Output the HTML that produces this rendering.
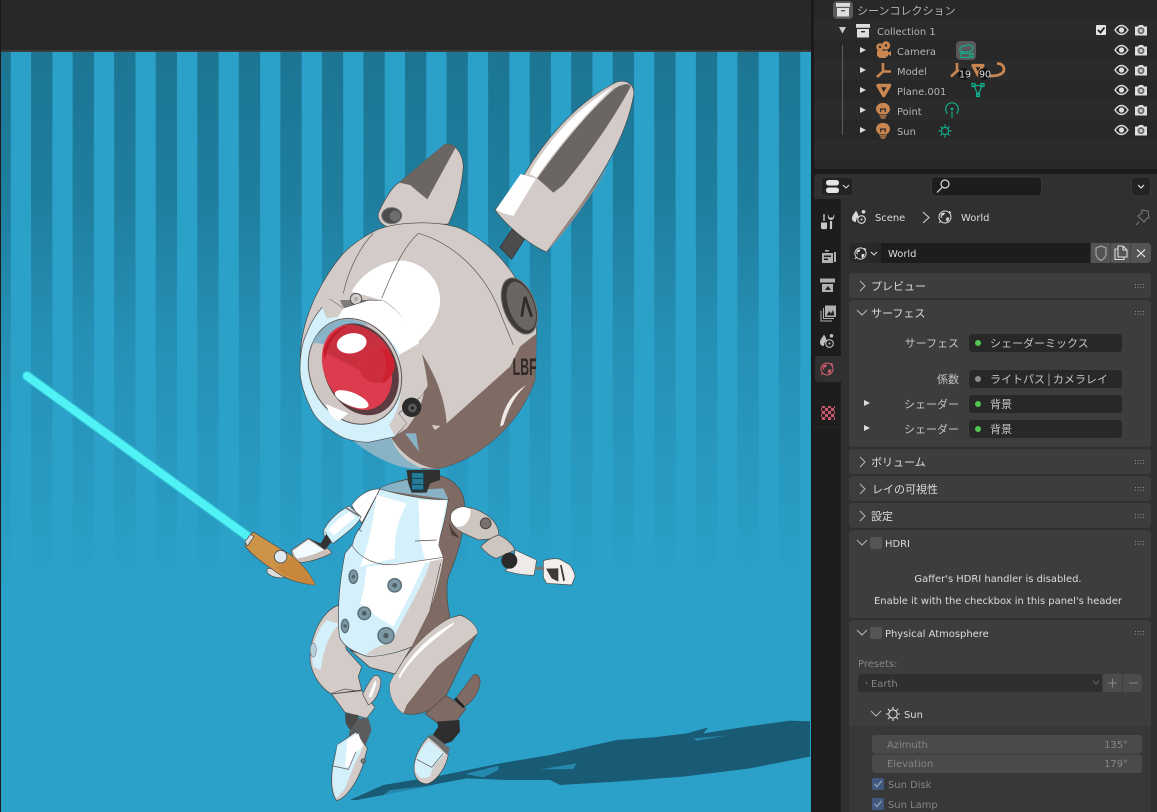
<!DOCTYPE html>
<html><head><meta charset="utf-8"><title>Blender</title>
<style>
html,body{margin:0;padding:0;background:#1a1a1a;width:1157px;height:812px;overflow:hidden}
svg{display:block}
text{font-family:"DejaVu Sans","Noto Sans CJK JP",sans-serif;font-size:9.95px;fill:#c4c4c4}
.j{font-family:"Noto Sans CJK JP","DejaVu Sans",sans-serif;font-size:11px}
.o{fill:#b4b4b4}
.d{fill:#858585}
.w{fill:#dcdcdc}
.e{text-anchor:end}
.m{text-anchor:middle}
.ln{stroke:#4a4644;stroke-width:2;stroke-linejoin:round}
.thin{fill:none;stroke:#5a5350;stroke-width:2}
</style></head><body>
<svg width="1157" height="812" viewBox="0 0 1157 812" xmlns="http://www.w3.org/2000/svg">
<defs>
<linearGradient id="fade" x1="0" y1="0" x2="0" y2="1"><stop offset="0" stop-color="#1c7593"/><stop offset=".27" stop-color="#1f7e9e"/><stop offset=".525" stop-color="#2590b6"/><stop offset=".76" stop-color="#2899c0"/><stop offset="1" stop-color="#2ba1ca"/></linearGradient>
<pattern id="stripes" x="-10.5" y="0" width="41.55" height="10" patternUnits="userSpaceOnUse"><rect x="0" width="21.3" height="10" fill="#fff"/></pattern>
<mask id="sm"><rect x="0" y="52" width="811" height="548" fill="url(#stripes)"/></mask>
<pattern id="chk" width="6" height="6" patternUnits="userSpaceOnUse"><rect width="6" height="6" fill="#c65a6c"/><rect width="3" height="3" fill="#2a2022"/><rect x="3" y="3" width="3" height="3" fill="#2a2022"/></pattern>
<pattern id="hatch" width="6" height="8" patternUnits="userSpaceOnUse" patternTransform="rotate(8)"><rect width="6" height="3" fill="#c22a38"/></pattern>
<symbol id="eye" viewBox="0 0 14 14" overflow="visible"><path d="M.5 7C3 3.2 5 2.5 7 2.5S11 3.2 13.5 7C11 10.8 9 11.5 7 11.5S3 10.8.5 7Z" fill="none" stroke="#dedede" stroke-width="1.400"/><circle cx="7" cy="7" r="2.600" fill="#dedede"/></symbol>
<symbol id="cam" viewBox="0 0 14 14" overflow="visible"><path d="M1 3.500h3l1-1.500h4l1 1.500h3v9H1Z" fill="#dedede"/><circle cx="7" cy="7.700" r="3.400" fill="#666"/><circle cx="7" cy="7.700" r="1.700" fill="#ccc"/></symbol>
<symbol id="tri" viewBox="0 0 8 8" overflow="visible"><path d="M1 1L7 4L1 7Z" fill="#dcdcdc"/></symbol>
<symbol id="bulb" viewBox="0 0 14 16" overflow="visible"><path d="M7 .8C3.200 .8 .8 3.400 .8 6.300C.8 8.800 2.800 9.600 3.600 11H10.400C11.200 9.600 13.200 8.800 13.200 6.300C13.200 3.400 10.800 .8 7 .8Z" fill="#c98650"/><path d="M4.300 6.300H9.700M5 6.300V9M9 6.300V9" stroke="#2a2a2a" stroke-width="1.100" fill="none"/><path d="M4 12.400H10M5 14.200H9" stroke="#c98650" stroke-width="1.200"/></symbol>
<symbol id="grip" viewBox="0 0 12 6" overflow="visible"><path d="M1 1.500h.9M3.700 1.500h.9M6.400 1.500h.9M9.100 1.500h.9M1 4.200h.9M3.700 4.200h.9M6.400 4.200h.9M9.100 4.200h.9" stroke="#999" stroke-width="1"/></symbol>
<symbol id="world" viewBox="0 0 16 16" overflow="visible"><circle cx="8" cy="8" r="6" fill="none" stroke="currentColor" stroke-width="1"/><path d="M4 5C5.500 3.600 7 3.400 8 4L7 6L4.500 6.800L5.500 9.500L3.500 8ZM9.500 8.500L12.500 8.500L11.500 11.500L9.800 13L9 10.500Z" fill="currentColor"/><path d="M2 13.800L4 11.800M12 2.200L14 4" stroke="currentColor" stroke-width="1"/></symbol>
<symbol id="scene" viewBox="0 0 16 16" overflow="visible"><path d="M5 1.500C6.500 4 7.500 5.500 7.500 8C6 8.500 5 10 5 13C2.500 13 1 11.500 1 9.500C1 6.500 3.500 4.500 5 1.500Z" fill="currentColor"/><circle cx="12.500" cy="2.800" r="1.800" fill="currentColor"/><circle cx="10.500" cy="10.500" r="3.800" fill="none" stroke="currentColor" stroke-width="1.100"/><circle cx="10.500" cy="10.500" r="1" fill="currentColor"/></symbol>
<symbol id="coll" viewBox="0 0 14 14" overflow="visible"><rect x="0" y="0" width="14" height="3.800" fill="#dedede"/><path d="M1 5H13V13.500H1ZM5 7V8.400H9V7Z" fill="#dedede" fill-rule="evenodd"/></symbol>
</defs>

<!-- viewport -->
<rect x="0" y="0" width="811" height="812" fill="#2ba1ca"/>
<rect x="0" y="0" width="811" height="50" fill="#282828"/>
<rect x="0" y="50" width="811" height="2" fill="#3c3c3c"/>
<rect x="0" y="0" width="1" height="812" fill="#1c1c1c"/>
<rect x="1" y="52" width="810" height="548" fill="url(#fade)" mask="url(#sm)"/>

<!-- floor shadow -->
<g transform="translate(350 700) scale(.33333)">
<path d="M0 300L100 255L280 225L450 190L600 165L800 120L910 112L1010 100L1075 82L1060 100L1190 80L1320 62L1380 64V170L1200 205L1000 230L800 245L630 255L600 240L470 240L350 235L260 252L100 285L20 300Z" fill="#195b74"/>
<path d="M345 222L445 197L445 210L400 232ZM570 208L680 190L670 207ZM1030 115L1130 107L1040 122ZM100 285L260 255L120 270Z" fill="#2489ad"/>
</g>

<!-- lightsaber -->
<path d="M27 376L250 538" stroke="#2fb9cf" stroke-width="10.500" stroke-linecap="round"/>
<path d="M27 376L250 538" stroke="#50f2f6" stroke-width="8" stroke-linecap="round"/>

<!-- body -->
<g transform="translate(230 470) scale(.33333)">
<!-- torso back -->
<path class="ln" d="M450 55C500 30 560 20 620 15C670 25 705 60 703 110C705 170 690 240 655 320C648 350 650 400 660 440L600 520L495 612L420 592L360 540L350 300Z" fill="#806b64"/>
<path d="M450 55C480 40 510 35 530 30L555 60L640 55L655 88L450 60Z" fill="#88b2c6"/>
<!-- neck -->
<path d="M530 0L630 0L630 30L600 40L590 68H545L535 40Z" fill="#30302f"/>
<rect x="545" y="8" width="36" height="52" fill="#257d9a" stroke="#153f50" stroke-width="3"/>
<path d="M548 25H578M548 43H578" stroke="#163f50" stroke-width="3"/>
<!-- left arm -->
<path class="ln" d="M365 105C385 75 420 55 450 57L395 160Z" fill="#fff"/>
<path class="ln" d="M280 182C295 150 330 120 358 108L393 140C385 165 340 195 310 220L285 210Z" fill="#d3f0fb"/>
<path d="M295 180C315 155 340 135 360 125L375 142C350 165 325 185 312 197Z" fill="#fff"/>
<path d="M345 112L388 138" stroke="#777" stroke-width="5"/>
<path class="ln" d="M185 240L235 205L300 240L305 250C275 265 240 275 215 278C195 275 185 260 185 240Z" fill="#cbbfb9"/>
<path d="M188 243L235 210L282 240C250 255 225 262 200 265Z" fill="#f2fbff"/>
<path d="M235 206L272 220L290 190L280 178L305 215L285 240L260 222Z" fill="#333"/>
<path class="ln" d="M112 295C105 312 130 328 168 322L160 298Z" fill="#ddd"/>
<!-- handle -->
<path class="ln" d="M45 228C48 210 58 195 70 186L182 255C215 280 240 310 256 345C200 340 160 325 130 300C100 280 65 255 45 228Z" fill="#cd9449"/>
<path d="M140 292C165 282 185 268 185 258C215 282 240 310 256 345C205 340 165 322 140 292Z" fill="#c8873a"/>
<circle cx="152" cy="260" r="19" fill="#dfe9ee" stroke="#555" stroke-width="3"/>
<path d="M45 215L62 193L72 200L52 228Z" fill="#ddd" stroke="#444" stroke-width="2"/>
<!-- right arm -->
<path class="ln" d="M662 130C680 100 730 108 770 135C800 155 815 190 800 205L745 210C705 190 655 180 662 130Z" fill="#cdc5c0"/>
<path d="M664 135C680 108 705 105 722 120C722 160 695 175 678 170C665 160 660 150 664 135Z" fill="#fff"/>
<path d="M655 155L665 195L690 205L665 175Z" fill="#4a3f3c"/>
<circle cx="767" cy="160" r="16" fill="#77706c" stroke="#444" stroke-width="3"/>
<path class="ln" d="M752 230C770 210 790 200 805 195C830 205 850 225 855 240L800 265C780 260 765 245 752 230Z" fill="#cdc5c0"/>
<path class="ln" d="M855 240L920 270L912 316C880 316 850 310 825 302L850 280Z" fill="#efeae7"/>
<circle cx="838" cy="272" r="24" fill="#2b2a2a"/>
<path d="M915 290H940V300H915Z" fill="#777"/>
<path class="ln" d="M940 272C960 265 980 265 990 268L1020 285C1030 300 1035 310 1035 320L1025 345L950 340C945 330 940 325 940 320Z" fill="#f4efec"/>
<path d="M948 296L985 295L985 335L965 325ZM995 285L1005 330L1000 335L990 285Z" fill="#3f3a38"/>
<!-- thigh L -->
<path class="ln" d="M328 405C280 420 240 490 240 570C245 620 280 660 305 672L395 660L385 620L395 590L350 540L330 470Z" fill="#d2cbc7"/>
<path d="M290 450L328 462C300 490 290 520 280 555L272 600L250 590C242 560 245 500 290 450Z" fill="#d3f0fb"/>
<ellipse cx="250" cy="540" rx="9" ry="21" fill="#b8d2dc" stroke="#888" stroke-width="2"/>
<path class="thin" d="M305 670L345 657L395 665"/>
<path class="ln" d="M305 672L395 662L435 712L410 745L345 727Z" fill="#d2cbc7"/>
<path class="ln" d="M398 672C410 650 420 628 432 618C445 612 455 625 452 640C450 665 435 695 415 705Z" fill="#d2cbc7"/>
<path d="M415 680L435 630L440 640L425 682Z" fill="#fff"/>
<path d="M345 730L385 735L385 780L360 780L347 760Z" fill="#4a4a48"/>
<path d="M385 745L415 745L425 780L405 830L350 830L360 780Z" fill="#5a5c5e"/>
<!-- thigh R -->
<path class="ln" d="M690 435C720 445 745 475 742 490C700 560 670 640 645 682C620 722 560 740 520 730C490 710 475 670 480 640C510 570 590 480 660 445Z" fill="#806b64"/>
<path d="M690 437C720 445 745 475 742 490L620 590L530 705L520 730C490 710 475 670 480 640C510 570 590 480 660 445Z" fill="#d2cbc7"/>
<path d="M672 457C610 490 550 540 505 620L510 625C540 565 610 510 672 462Z" fill="#fff"/>
<path d="M680 682L730 615C745 610 755 625 748 650C740 680 720 700 700 712Z" fill="#806b64" stroke="#5a4a45" stroke-width="2"/>
<path class="ln" d="M585 732L648 676L708 716L680 752L620 757Z" fill="#806b64"/>
<path d="M675 685L702 712" stroke="#222" stroke-width="8"/>
<path d="M620 755L688 750L690 785L665 815L620 830L605 800L625 770Z" fill="#2e2e2e"/>
<!-- feet -->
<path class="ln" d="M322 825L378 785L412 835L398 888C375 950 345 985 320 992C305 975 300 930 310 880Z" fill="#d2cbc7"/>
<path d="M322 825L375 790L395 840L375 880L345 955L320 985C306 960 304 920 312 880Z" fill="#d3f0fb"/>
<path d="M352 810L385 790L400 830L375 850L360 890L345 890Z" fill="#fff"/>
<path class="thin" d="M310 888L355 898L378 845"/>
<circle cx="400" cy="873" r="7" fill="#777" stroke="#444" stroke-width="2"/>
<path class="ln" d="M595 800L655 852C650 890 620 935 590 942C565 940 550 920 552 890C555 850 580 815 595 800Z" fill="#d2cbc7"/>
<path d="M597 812L645 852L610 890L600 920L575 925C560 915 552 905 555 880C565 845 585 820 597 812Z" fill="#d3f0fb"/>
<path class="thin" d="M560 868L605 892L640 850"/>
<path d="M595 797L610 795L660 835L652 855Z" fill="#6c6c6c"/>
<!-- torso lower -->
<path d="M360 540C395 560 480 560 545 530L495 612L420 592Z" fill="#d2cbc7" stroke="#4a4644" stroke-width="2"/>
<!-- torso front -->
<path class="ln" d="M450 57C510 75 600 92 655 88C650 130 635 190 622 225L640 265C630 330 610 390 600 420L545 530C500 550 440 562 408 558C370 545 340 530 328 500C322 440 325 350 345 250L368 222C372 200 380 185 390 175Z" fill="#d3f0fb"/>
<path d="M440 75L530 100C500 160 490 210 495 265L390 290C420 220 430 140 440 75Z" fill="#fff"/>
<path d="M565 90L650 92L625 225L640 265L590 280C560 200 570 150 565 90Z" fill="#fff"/>
<path d="M410 290L590 270L535 385L490 470L440 440L390 400C405 360 405 320 410 290Z" fill="#fff"/>
<path d="M640 265C630 330 610 390 600 420L545 530C500 545 440 562 408 555C430 530 470 525 490 505C520 440 590 330 600 275Z" fill="#d2cbc7"/>
<path class="thin" d="M365 225C390 265 440 290 500 283L640 262M555 213L620 210M385 175L395 185"/>
<path class="thin" d="M632 280L600 420"/>
<!-- bolts -->
<g fill="#7c98a4" stroke="#5a6c74" stroke-width="4">
<ellipse cx="370" cy="320" rx="13" ry="20"/><circle cx="494" cy="346" r="20"/><circle cx="403" cy="430" r="19"/><ellipse cx="345" cy="468" rx="11" ry="20"/><circle cx="468" cy="497" r="24"/>
</g>
<g fill="#4e5c63"><circle cx="370" cy="320" r="5"/><circle cx="494" cy="346" r="7"/><circle cx="403" cy="430" r="7"/><circle cx="345" cy="468" r="5"/><circle cx="468" cy="497" r="8"/></g>
</g>

<!-- head -->
<g transform="translate(280 70) scale(.33333)">
<path d="M660 532L695 478L735 505L695 568Z" fill="#4c4c4c" stroke="#2c2c2c" stroke-width="2"/>
<!-- big ear -->
<path class="ln" d="M645 420L735 310C800 200 900 90 1010 36C1040 28 1062 42 1062 70C1040 200 960 330 870 450L800 546C760 530 690 480 645 420Z" fill="#d2cbc7"/>
<path d="M1005 55C1030 40 1050 38 1052 50C1000 150 920 260 850 345L820 368L772 325C840 230 920 130 1005 55Z" fill="#6b6662"/>
<path d="M748 312C810 200 900 110 1000 50C920 130 840 220 770 322Z" fill="#fff"/>
<path d="M648 418L722 312L768 326L700 438L670 430Z" fill="#fff"/>
<path d="M800 545L870 450L985 290C950 350 880 460 800 545Z" fill="#9c8b85"/>
<!-- small ear -->
<path class="ln" d="M295 430C305 405 335 350 355 340L492 225C525 215 548 250 550 290C545 350 530 410 505 462L320 470C300 460 292 445 295 430Z" fill="#d2cbc7"/>
<path d="M357 338L492 224C510 220 525 225 527 232L442 388L390 345Z" fill="#6b6662"/>
<ellipse cx="335" cy="437" rx="30" ry="24" fill="#4c4c4c" stroke="#777" stroke-width="3"/>
<circle cx="345" cy="438" r="16" fill="#6f6f6f"/>
<!-- shell -->
<path class="ln" d="M290 480C350 455 470 450 540 475C640 520 730 620 770 770L765 930C720 1060 600 1170 470 1197C400 1200 300 1170 210 1105L135 1060C80 1000 55 920 62 840C70 730 130 620 190 550C220 520 260 495 290 480Z" fill="#d2cbc7"/>
<!-- brown -->
<path d="M770 790L720 830L690 890L500 1060C495 990 470 920 425 850C445 930 440 1000 380 1075L335 1105C370 1160 420 1190 470 1197C600 1170 720 1060 765 930Z" fill="#806b64"/>
<path d="M660 1070C670 1010 695 970 740 945C705 975 685 1015 670 1065Z" fill="#efe9e5"/>
<path d="M455 1065L482 1068L465 1080Z" fill="#d2cbc7"/>
<path d="M375 1090L417 1145L408 1090Z" fill="#88b2c6"/>
<path d="M210 1105L335 1105C350 1150 380 1175 430 1197C360 1200 290 1170 210 1105Z" fill="#88b2c6"/>
<!-- white -->
<path d="M215 665C250 600 320 570 370 572C440 580 485 640 480 700C475 760 420 820 360 855C345 790 320 720 305 690Z" fill="#fff"/>
<path class="thin" d="M415 490C370 530 340 600 305 685M280 490C240 530 205 600 190 670M415 490C520 520 620 610 665 740L700 825"/>
<!-- disc -->
<ellipse cx="718" cy="708" rx="48" ry="88" transform="rotate(-20 718 708)" fill="#3e3a38" stroke="#777" stroke-width="3"/>
<ellipse cx="724" cy="708" rx="38" ry="76" transform="rotate(-20 724 708)" fill="#6b6662"/>
<path d="M735 680L725 740M735 680L755 740" stroke="#2c2c2c" stroke-width="8"/>
<text x="698" y="915" style="font-size:72px;font-weight:700;fill:#2f2a28;font-family:'Liberation Sans',sans-serif" textLength="72" lengthAdjust="spacingAndGlyphs">LBF</text>
</g>

<!-- eye plate -->
<g transform="translate(295 280) scale(.33333)">
<path d="M135 60L220 60L165 95C150 90 140 75 135 60Z" fill="#7f7a77"/>
<circle cx="183" cy="57" r="17" fill="#d2cbc7" stroke="#555" stroke-width="3"/><circle cx="183" cy="57" r="6" fill="#aaa"/>
<path class="ln" d="M105 58L145 85L220 60L265 62C310 90 355 140 380 240L398 320L375 352L310 400L335 430L300 470L220 487C180 485 150 478 130 465C90 440 65 420 50 390C30 350 15 310 15 270C15 225 20 190 35 160C50 120 75 85 105 58Z" fill="#d3f0fb"/>
<path d="M135 88L220 62L265 62C310 90 350 140 372 190L315 225C290 170 230 125 165 118L130 115Z" fill="#fff"/>
<path d="M372 190C385 230 398 300 398 320L375 352L335 372L310 400L335 430L300 468L282 435C310 400 325 330 318 280L312 225Z" fill="#d2cbc7"/>
<path d="M78 72L105 58L145 85L130 110L95 115Z" fill="#d2cbc7"/>
<ellipse cx="180" cy="274" rx="135" ry="163" transform="rotate(-24 180 274)" fill="#cfc7c3" stroke="#5a5a5a" stroke-width="3"/>
<path d="M52 190C70 150 110 115 165 118C185 120 205 125 220 135C170 130 125 150 92 195C80 190 65 188 52 190Z" fill="#88b2c6"/>
<path d="M92 372L160 400L130 425C115 415 100 400 92 372Z" fill="#fff"/>
<ellipse cx="197" cy="268" rx="108" ry="143" transform="rotate(-24 197 268)" fill="#5c3c40"/>
<ellipse cx="186" cy="262" rx="99" ry="133" transform="rotate(-24 186 262)" fill="#dc3c4e"/>
<path d="M85 215C95 170 130 135 170 135C230 140 290 190 300 260C290 280 280 300 270 310Z" fill="#c9303f"/>
<path d="M85 215C100 165 130 140 160 138C130 150 100 180 90 240Z" fill="#c01c2b"/>
<circle cx="245" cy="255" r="54" fill="#cf2f3f"/>
<circle cx="245" cy="255" r="50" fill="url(#hatch)" opacity=".6"/>
<path d="M250 200A56 56 0 0 1 255 310C275 290 285 230 250 200Z" fill="#cf2030"/>
<ellipse cx="170" cy="190" rx="45" ry="30" transform="rotate(-10 170 190)" fill="#fff"/>
<ellipse cx="170" cy="358" rx="54" ry="20" transform="rotate(22 170 358)" fill="#fff"/>
<circle cx="350" cy="382" r="29" fill="#2b2b2b"/><circle cx="352" cy="384" r="13" fill="#5c5c5c"/><circle cx="352" cy="384" r="5" fill="#222"/>
</g>

<!-- ============ RIGHT SIDE ============ -->
<rect x="811" y="0" width="346" height="812" fill="#1a1a1a"/>
<!-- outliner -->
<path d="M814 0H1157V169H818Q814 169 814 165Z" fill="#282828"/>
<rect x="814" y="20" width="343" height="20" fill="#2b2b2b"/>
<rect x="814" y="60" width="343" height="20" fill="#2b2b2b"/>
<rect x="814" y="100" width="343" height="20" fill="#2b2b2b"/>
<rect x="814" y="140" width="343" height="20" fill="#2b2b2b"/>
<rect x="833" y="1" width="20" height="18" rx="4" fill="#5a5a5a"/>
<use href="#coll" x="836" y="3" width="14" height="14"/>
<text class="j o" x="857" y="14.500">シーンコレクション</text>
<path d="M839 27H846L842.500 33.500Z" fill="#ccc"/>
<use href="#coll" x="856" y="24" width="14" height="14"/>
<text class="o" x="877" y="35">Collection 1</text>
<rect x="1096" y="25" width="10" height="10" rx="1" fill="#e4e4e4"/><path d="M1098 30L1100.500 32.500L1104.500 27.500" stroke="#222" stroke-width="1.800" fill="none"/>
<path d="M842.500 45V135" stroke="#5c5c5c"/>
<use href="#tri" x="859" y="46" width="8" height="8"/><use href="#tri" x="859" y="66" width="8" height="8"/><use href="#tri" x="859" y="86" width="8" height="8"/><use href="#tri" x="859" y="106" width="8" height="8"/><use href="#tri" x="859" y="126" width="8" height="8"/>
<!-- camera icon -->
<g fill="#c98650"><circle cx="880" cy="47" r="3.800"/><circle cx="886" cy="45.500" r="4.200"/><path d="M877 50.500H888V56.500H877ZM879 56.500H886V58H879ZM888 52.500L891 51V56L888 54.500Z"/></g>
<circle cx="880" cy="47" r="1.200" fill="#2a2a2a"/><circle cx="886" cy="45.500" r="1.200" fill="#2a2a2a"/>
<!-- empty icon -->
<path d="M883 63V71.500M883 71.500L877 77M883 71.500H891" stroke="#c98650" stroke-width="2.600" fill="none"/>
<!-- mesh -->
<path d="M878 85.500H889.500L883.700 95.500Z" fill="none" stroke="#c98650" stroke-width="3.500" stroke-linejoin="round"/>
<use href="#bulb" x="875" y="102" width="16" height="18"/>
<use href="#bulb" x="875" y="122" width="16" height="18"/>
<text class="o" x="897" y="55">Camera</text>
<text class="o" x="897" y="75">Model</text>
<text class="o" x="897" y="95">Plane.001</text>
<text class="o" x="897" y="115">Point</text>
<text class="o" x="897" y="135">Sun</text>
<!-- children -->
<rect x="956" y="41" width="20" height="19" rx="4" fill="#585858"/>
<g fill="none" stroke="#12b08f" stroke-width="1.100"><path d="M960 52C959 47 963 45 966 46C968 44 973 45 973 48C973 51 970 52 968 52Z"/><path d="M961 53.500H970V57.500H961ZM970 54.500L973 53.500V57.500L970 56.500M964 53L961 51"/></g>
<path d="M957 63V71M957 71L951 76.500M957 71H965" stroke="#c98650" stroke-width="2.600" fill="none"/>
<path d="M973 65.500H983L978 75Z" fill="#2b2b2b" stroke="#c98650" stroke-width="3.200" stroke-linejoin="round"/>
<path d="M997 63.500C1002 63.500 1004 66.500 1004 69.500C1004 73.500 999 76 990 76" fill="none" stroke="#c98650" stroke-width="2.800"/>
<circle cx="964" cy="74" r="5.800" fill="#111"/><circle cx="984" cy="74" r="5.800" fill="#111"/>
<text x="959" y="77.500" style="font-size:9.500px;fill:#ddd">19</text><text x="979" y="77.500" style="font-size:9.500px;fill:#ddd">90</text>
<g fill="none" stroke="#12b08f" stroke-width="1.200"><path d="M974 85.500H982L978 95Z"/><rect x="972" y="83.500" width="3" height="3"/><rect x="981" y="83.500" width="3" height="3"/><rect x="976.500" y="93.500" width="3" height="3"/>
<path d="M947.500 113.500A6.300 6.300 0 1 1 956.500 113.500M952 118V111.500"/><circle cx="952" cy="109" r=".8"/>
<circle cx="945" cy="131" r="3.600"/><path d="M945 124.500V126.500M945 135.500V137.500M938.500 131H940.500M949.500 131H951.500M940.500 126.500L942 128M948 134L949.500 135.500M940.500 135.500L942 134M948 128L949.500 126.500"/></g>
<g>
<use href="#eye" x="1114.500" y="23" width="14" height="14"/><use href="#cam" x="1134" y="23" width="14" height="14"/>
<use href="#eye" x="1114.500" y="43" width="14" height="14"/><use href="#cam" x="1134" y="43" width="14" height="14"/>
<use href="#eye" x="1114.500" y="63" width="14" height="14"/><use href="#cam" x="1134" y="63" width="14" height="14"/>
<use href="#eye" x="1114.500" y="83" width="14" height="14"/><use href="#cam" x="1134" y="83" width="14" height="14"/>
<use href="#eye" x="1114.500" y="103" width="14" height="14"/><use href="#cam" x="1134" y="103" width="14" height="14"/>
<use href="#eye" x="1114.500" y="123" width="14" height="14"/><use href="#cam" x="1134" y="123" width="14" height="14"/>
</g>

<!-- properties -->
<path d="M818 174H1157V812H814V178Q814 174 818 174Z" fill="#303030"/>
<rect x="813" y="199" width="28" height="613" fill="#1d1d1d"/>
<path d="M841 356H819Q815 356 815 360V378Q815 382 819 382H841Z" fill="#303030"/>
<rect x="821" y="177" width="32" height="19" rx="4" fill="#232323" stroke="#383838"/>
<rect x="826" y="180" width="13" height="5.500" rx="2.700" fill="#e4e4e4"/><rect x="826" y="187.500" width="13" height="5.500" rx="2.700" fill="#e4e4e4"/>
<path d="M843 185L846 188L849 185" stroke="#ddd" fill="none" stroke-width="1.100"/>
<rect x="931.500" y="177" width="110" height="19" rx="3" fill="#1d1d1d" stroke="#383838"/>
<circle cx="945" cy="184" r="4" fill="none" stroke="#ddd" stroke-width="1.200"/><path d="M942 187.500L937 192.500" stroke="#ddd" stroke-width="1.200"/>
<rect x="1131.500" y="177" width="19" height="19" rx="4" fill="#232323" stroke="#383838"/>
<path d="M1138 185L1141 188L1144 185" stroke="#ddd" fill="none" stroke-width="1.200"/>

<!-- tabs -->
<g stroke="#c8c8c8" fill="none">
<path d="M824 214V221" stroke-width="1.400"/><path d="M821.500 223H826.500V228C826.500 229 821.500 229 821.500 228Z" fill="#c8c8c8"/>
<path d="M831 221V229" stroke-width="2.200"/><path d="M828 214C827 218 829 220 831 220C833 220 835 218 834 214L833 217.500H829Z" fill="#c8c8c8" stroke="none"/>
</g>
<g fill="#b0b0b0">
<path d="M822 253H833V263H822ZM824 255.500V257H831V255.500ZM824 258.500V260H828V258.500Z" fill-rule="evenodd"/><path d="M834 252H836V262H834ZM825 250H829V251.500H825Z"/>
<path d="M820 278.500H835V282.500H820ZM822 284H833V292H822Z"/><path d="M825 290L828 286L831 290Z" fill="#222"/>
<path d="M825 305.500H836V317H825Z"/><path d="M823 308H824V318H834V319H823ZM820.500 310.500H821.500V320.500H832V321.500H820.500Z"/><path d="M826.500 315.500L829 311L831 313.500L833 310L834.500 315.500Z" fill="#222"/>
</g>
<use href="#scene" x="819" y="333" width="16" height="16" color="#bdbdbd"/>
<use href="#world" x="819" y="361" width="16" height="16" color="#d85e72"/>
<rect x="821" y="406" width="14" height="14" fill="url(#chk)"/>
<path d="M813 427H841" stroke="#262626"/>

<!-- breadcrumbs -->
<use href="#scene" x="851" y="209" width="16" height="16" color="#d8d8d8"/>
<text class="w" x="875" y="221">Scene</text>
<path d="M923 212L929 217.500L923 223" stroke="#ccc" fill="none" stroke-width="1.100"/>
<use href="#world" x="937" y="209" width="16" height="16" color="#d8d8d8"/>
<text class="w" x="961" y="221">World</text>
<path d="M1147 211L1141 210L1141 213L1137 216L1143 222L1146 218L1148 218ZM1138 222L1135 225" fill="none" stroke="#777" stroke-width="1.100" transform="translate(1 0)"/>

<!-- ID row -->
<path d="M854 243H881V263H854Q850 263 850 259V247Q850 243 854 243Z" fill="#282828"/>
<use href="#world" x="853" y="246" width="15" height="15" color="#e0e0e0"/>
<path d="M871 252L874 255L877 252" stroke="#ddd" fill="none"/>
<rect x="881" y="243" width="209" height="20" fill="#1d1d1d"/>
<text class="w" x="888" y="257">World</text>
<rect x="1091" y="243" width="19.500" height="20" fill="#545454"/>
<rect x="1111" y="243" width="19.500" height="20" fill="#545454"/>
<path d="M1131 243H1147Q1151 243 1151 247V259Q1151 263 1147 263H1131Z" fill="#545454"/>
<path d="M1096 248L1101 246L1106 248V254C1106 257 1103 259.500 1101 260.500C1099 259.500 1096 257 1096 254Z" fill="none" stroke="#aaa" stroke-width="1.100"/>
<path d="M1118 246H1123L1127 250V257H1118ZM1123 246V250H1127M1118 249H1115V259.500H1124V257" fill="none" stroke="#ddd" stroke-width="1.100"/>
<path d="M1137 249.500L1145 257M1145 249.500L1137 257" stroke="#ddd" stroke-width="1.200"/>

<!-- panels -->
<g fill="#3d3d3d">
<rect x="849" y="273" width="302" height="25" rx="4"/>
<rect x="849" y="300" width="302" height="147" rx="4"/>
<rect x="849" y="449" width="302" height="25" rx="4"/>
<rect x="849" y="476" width="302" height="25" rx="4"/>
<rect x="849" y="503" width="302" height="25" rx="4"/>
<rect x="849" y="530" width="302" height="88" rx="4"/>
<path d="M853 620H1147Q1151 620 1151 624V812H849V624Q849 620 853 620Z"/>
</g>
<rect x="849" y="726" width="302" height="86" fill="#383838"/>
<g stroke="#b8b8b8" fill="none" stroke-width="1">
<path d="M860 281L865 286L860 291M860 457L865 462L860 467M860 484L865 489L860 494M860 511L865 516L860 521"/>
<path d="M857 310L862 315L867 310M857 540L862 545L867 540M857 630L862 635L867 630M871 711L876 716L881 711"/>
</g>
<use href="#grip" x="1134" y="283" width="12" height="6"/><use href="#grip" x="1134" y="310" width="12" height="6"/><use href="#grip" x="1134" y="459" width="12" height="6"/><use href="#grip" x="1134" y="486" width="12" height="6"/><use href="#grip" x="1134" y="513" width="12" height="6"/><use href="#grip" x="1134" y="540" width="12" height="6"/><use href="#grip" x="1134" y="630" width="12" height="6"/>
<text class="j w" x="871" y="290">プレビュー</text>
<text class="j w" x="871" y="317">サーフェス</text>
<text class="j w" x="871" y="466">ボリューム</text>
<text class="j w" x="872" y="493">レイの可視性</text>
<text class="j w" x="871" y="520">設定</text>
<text class="w" x="885" y="547">HDRI</text>
<text class="w" x="885" y="637">Physical Atmosphere</text>
<rect x="870" y="537" width="12" height="12" rx="2" fill="#545454"/>
<rect x="870" y="627" width="12" height="12" rx="2" fill="#545454"/>

<!-- surface -->
<g fill="#282828">
<rect x="969" y="334" width="153" height="18" rx="3"/><rect x="969" y="370" width="153" height="18" rx="3"/><rect x="969" y="395" width="153" height="18" rx="3"/><rect x="969" y="420" width="153" height="18" rx="3"/>
</g>
<text class="j e" x="959" y="347">サーフェス</text>
<text class="j e" x="959" y="383">係数</text>
<text class="j e" x="959" y="408">シェーダー</text>
<text class="j e" x="959" y="433">シェーダー</text>
<circle cx="978" cy="343" r="3" fill="#55c555"/><circle cx="978" cy="379" r="3" fill="#8c8c8c"/><circle cx="978" cy="404" r="3" fill="#55c555"/><circle cx="978" cy="429" r="3" fill="#55c555"/>
<text class="j" x="990" y="347">シェーダーミックス</text>
<text class="j" x="990" y="383">ライトパス | カメラレイ</text>
<text class="j" x="990" y="408">背景</text>
<text class="j" x="990" y="433">背景</text>
<use href="#tri" x="863" y="399" width="8" height="8"/><use href="#tri" x="863" y="424" width="8" height="8"/>

<!-- HDRI -->
<text class="w m" x="998" y="582">Gaffer's HDRI handler is disabled.</text>
<text class="w m" x="998" y="604">Enable it with the checkbox in this panel's header</text>

<!-- Atmosphere -->
<text class="d" x="858" y="667">Presets:</text>
<path d="M862 674H1102V692H862Q858 692 858 688V678Q858 674 862 674Z" fill="#2f2f2f"/>
<path d="M1103 674H1122V692H1103Z" fill="#4c4c4c"/><path d="M1123 674H1138Q1142 674 1142 678V688Q1142 692 1138 692H1123Z" fill="#4c4c4c"/>
<circle cx="866.500" cy="683" r=".8" fill="#888"/>
<text class="d" x="871" y="687">Earth</text>
<path d="M1093 681L1096 684L1099 681" stroke="#666" fill="none"/>
<path d="M1108 683H1117M1112.500 678.500V687.500M1129 683H1138" stroke="#888" stroke-width="1.100"/>
<g stroke="#e0e0e0" fill="none" stroke-width="1.100"><circle cx="893" cy="714" r="4.200"/><path d="M893 707V709M893 719V721M886 714H888M898 714H900M888 709L889.500 710.500M896.500 717.500L898 719M888 719L889.500 717.500M896.500 710.500L898 709"/></g>
<text class="w" x="904" y="718">Sun</text>
<rect x="872" y="735" width="270" height="18.500" rx="3" fill="#4a4a4a"/>
<rect x="872" y="754.500" width="270" height="18.500" rx="3" fill="#4a4a4a"/>
<text class="d" x="887" y="748">Azimuth</text><text class="d e" x="1128" y="748">135°</text>
<text class="d" x="887" y="767">Elevation</text><text class="d e" x="1128" y="767">179°</text>
<rect x="872" y="778" width="12" height="12" rx="2" fill="#41587f"/>
<rect x="872" y="798" width="12" height="12" rx="2" fill="#41587f"/>
<path d="M874.500 784L877 786.500L881.500 781M874.500 804L877 806.500L881.500 801" stroke="#8a97ab" stroke-width="1.500" fill="none"/>
<text class="d" x="888" y="788">Sun Disk</text>
<text class="d" x="888" y="808">Sun Lamp</text>
</svg>
</body></html>
